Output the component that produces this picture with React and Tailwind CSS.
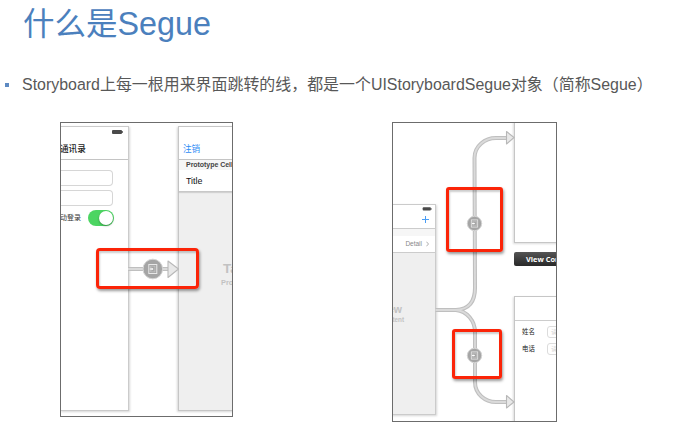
function SegueIcon({ x, y, r, scale = 1 }) {
  return (
    <g transform={`translate(${x} ${y})`}>
      <circle r={r} fill="#a5a5a5" stroke="#d4d4d4" strokeWidth="1" />
      <g transform={`scale(${scale})`} fill="none">
        <rect x="-4" y="-4.5" width="8" height="9" stroke="#e8e8e8" strokeWidth="1" />
        <rect x="-2.1" y="-2.9" width="4.2" height="5.8" strokeWidth="0.6" stroke="#cacaca" />
        <path d="M-3 -0.5H-1.2V-1.5L0.7 0L-1.2 1.5V0.5H-3Z" fill="#ffffff" />
      </g>
    </g>
  );
}

function Wire({ d }) {
  return (
    <g fill="none">
      <path d={d} stroke="#bfbfbf" strokeWidth="4" />
      <path d={d} stroke="#dadada" strokeWidth="1.8" />
    </g>
  );
}

function Arrow({ d }) {
  return <path d={d} fill="#e8e8e8" stroke="#b8b8b8" strokeWidth="1.1" strokeLinejoin="round" />;
}

function Battery() {
  return (
    <span className="flex items-center">
      <span className="h-[3.5px] w-[10px] rounded-[1px] bg-[#4a4a4a]" />
      <span className="h-[1.5px] w-px bg-[#777]" />
    </span>
  );
}

function Highlight({ className }) {
  return (
    <div className={`absolute border-[#fb2408] shadow-[1px_2px_3px_rgba(0,0,0,0.4),inset_1px_2px_2px_rgba(0,0,0,0.2)] ${className}`} />
  );
}

function LoginCanvas() {
  return (
    <div className="relative ml-[60px] h-[295px] w-[173px] overflow-hidden border border-[#6c6c6c] bg-white">
      {/* Login scene */}
      <div className="absolute -left-px top-[3px] flex h-[285px] w-[69px] flex-col border-y border-r border-[#cbcbcb] bg-white shadow-[1px_1px_2px_rgba(0,0,0,0.16)]">
        <div className="flex h-[33px] flex-col border-b border-[#c4c4c4]">
          <div className="mt-[3px] flex justify-end pr-[5px]"><Battery /></div>
          <div className="mt-[9px] h-[12px] whitespace-nowrap text-[8.6px] font-medium leading-[12px] text-[#1a1a1a]">通讯录</div>
        </div>
        <div className="mt-[10px] h-[16px] w-[53px] rounded-r-[4px] border border-l-0 border-[#d6d6d6]" />
        <div className="mt-[4px] h-[16px] w-[53px] rounded-r-[4px] border border-l-0 border-[#d6d6d6]" />
        <div className="mt-[4px] flex h-[16px] items-center">
          <span className="whitespace-nowrap text-[7px] text-[#333]">动登录</span>
          <span className="ml-[7px] flex h-[16px] w-[26px] items-center justify-end rounded-full bg-[#4cd562] p-px">
            <span className="h-[14px] w-[14px] rounded-full bg-white shadow-[0_1px_2px_rgba(0,0,0,0.35)]" />
          </span>
        </div>
      </div>
      {/* Table scene */}
      <div className="absolute left-[117px] top-[3px] flex h-[285px] w-[70px] flex-col border border-[#c6c6c6] bg-[#efefef] shadow-[-1px_1px_2px_rgba(0,0,0,0.16)]">
        <div className="flex h-[33px] items-end border-b border-[#c4c4c4] bg-white pb-[4px] pl-[4px]">
          <span className="h-[12px] text-[8.6px] leading-[12px] text-[#2d8cf5]">注销</span>
        </div>
        <div className="h-[10px] whitespace-nowrap bg-[#f6f6f6] pl-[7px] text-[7px] font-bold leading-[10px] tracking-[-0.04px] text-[#444]">Prototype Cells</div>
        <div className="h-[22px] border-b border-[#c8c8c8] bg-white pl-[7px] text-[8.9px] leading-[22px] text-[#111] shadow-[0_1px_1px_rgba(0,0,0,0.12)]">Title</div>
        <div className="mt-[69px] whitespace-nowrap pl-[44px] font-bold text-[#c2c2c2]">
          <div className="text-[13.5px] leading-[15px]">Table View</div>
          <div className="-ml-[2px] text-[7.4px] leading-[13px]">Prototype Content</div>
        </div>
      </div>
      <svg className="absolute left-0 top-0" width="171" height="293" viewBox="61 123 171 293">
        <Wire d="M128 269H143M162 269H169" />
        <Arrow d="M168 261L178.5 269L168 277.5Z" />
        <SegueIcon x={152.8} y={269} r={9.8} />
      </svg>
      <Highlight className="left-[35px] top-[125px] h-[41px] w-[103px] rounded-[4px] border-[3px]" />
    </div>
  );
}

function Field({ label }) {
  return (
    <div className="flex h-[12px] items-center">
      <span className="w-[25px] shrink-0 whitespace-nowrap text-[6.4px] text-[#222]">{label}</span>
      <span className="h-[12px] w-[30px] shrink-0 whitespace-nowrap rounded-[3px] border border-[#dcdcdc] pl-[3px] text-[6px] leading-[10px] text-[#cfcfcf]">请输入</span>
    </div>
  );
}

function ContactsCanvas() {
  return (
    <div className="relative ml-[159px] h-[300px] w-[165px] overflow-hidden border border-[#6c6c6c] bg-white">
      {/* Contacts list scene */}
      <div className="absolute -left-[2px] top-[81px] flex h-[211px] w-[45px] flex-col border border-[#cbcbcb] bg-[#efefef] shadow-[1px_1px_2px_rgba(0,0,0,0.16)]">
        <div className="h-[24px] border-b border-[#ccc] bg-white">
          <div className="mt-[2px] flex origin-right scale-[0.82] justify-end pr-[4px]"><Battery /></div>
          <svg className="ml-auto mr-[5px] mt-[4.5px]" width="9" height="9" viewBox="0 0 9 9">
            <path d="M4.5 1V8M1 4.5H8" stroke="#4a9df5" />
          </svg>
        </div>
        <div className="h-[7px] bg-[#f6f6f6]" />
        <div className="flex h-[17px] items-center justify-end border-b border-[#ccc] bg-white pr-[6px]">
          <span className="text-[6.5px] text-[#888]">Detail</span>
          <svg className="ml-[4px]" width="3" height="6" viewBox="0 0 3 6">
            <path d="M0.4 0.7L2.5 3L0.4 5.3" fill="none" stroke="#999" strokeWidth="0.8" />
          </svg>
        </div>
        <div className="mt-[50px] flex flex-col items-end whitespace-nowrap font-bold text-[#c2c2c2]">
          <div className="mr-[33px] text-[10.5px] leading-[12px]">Table View</div>
          <div className="mr-[31px] text-[6.3px] leading-[9px]">Prototype Content</div>
        </div>
      </div>
      {/* Detail scenes */}
      <div className="absolute -top-[2px] left-[121px] h-[122px] w-[50px] border border-[#c6c6c6] bg-white shadow-[-1px_1px_2px_rgba(0,0,0,0.14)]" />
      <div className="absolute left-[121px] top-[129px] h-[14px] w-[50px] whitespace-nowrap rounded-l-[2px] bg-gradient-to-b from-[#555] to-[#292929] pl-[12px] font-['Open_Sans',sans-serif] text-[7.4px] font-bold leading-[14px] text-white">View Controller</div>
      <div className="absolute left-[121px] top-[173px] flex h-[140px] w-[50px] flex-col border border-[#c6c6c6] bg-white shadow-[-1px_1px_2px_rgba(0,0,0,0.14)]">
        <div className="h-[24px] border-b border-[#ccc]" />
        <div className="mt-[5px] flex flex-col gap-[5px] pl-[7px]">
          <Field label="姓名" />
          <Field label="电话" />
        </div>
      </div>
      <svg className="absolute left-0 top-0" width="163" height="298" viewBox="393 123 163 298">
        <Wire d="M435.5 310H456Q475 309 475 288L474.5 158C474.5 146 485 138 496 138H506M456 310C467 311 475 321 475 332V382C475 394 485 402 496 402H506" />
        <Arrow d="M506.5 131.5L514 137.5L506.5 144Z" />
        <Arrow d="M506.5 395.5L514 402L506.5 408Z" />
        <SegueIcon x={474.5} y={223.5} r={7.2} scale={0.8} />
        <SegueIcon x={474.5} y={355.5} r={7.2} scale={0.8} />
      </svg>
      <Highlight className="left-[53px] top-[64px] h-[65px] w-[57px] rounded-[3px] border-[3px]" />
      <Highlight className="left-[59px] top-[206px] h-[50px] w-[50px] rounded-[3px] border-[3px]" />
    </div>
  );
}

export default function App() {
  return (
    <main className="h-[423px] w-[677px] overflow-hidden bg-white font-['Liberation_Sans','Noto_Sans_CJK_SC',sans-serif]">
      <h1 className="h-[74px] whitespace-nowrap pl-[23px] pt-[4px] text-[31.5px] font-normal leading-[40px] text-[#4b80bd]">
        什么是<span className="text-[32.3px]">Segue</span>
      </h1>
      <div className="flex h-[48px] items-start">
        <span className="ml-[5px] mt-[9px] h-[4px] w-[4px] bg-[#5d8ac2]" />
        <p className="ml-[13px] whitespace-nowrap text-[15.95px] font-normal leading-[22px] text-[#585858]">
          Storyboard上每一根用来界面跳转的线，都是一个UIStoryboardSegue对象（简称Segue）
        </p>
      </div>
      <div className="flex items-start">
        <LoginCanvas />
        <ContactsCanvas />
      </div>
    </main>
  );
}
